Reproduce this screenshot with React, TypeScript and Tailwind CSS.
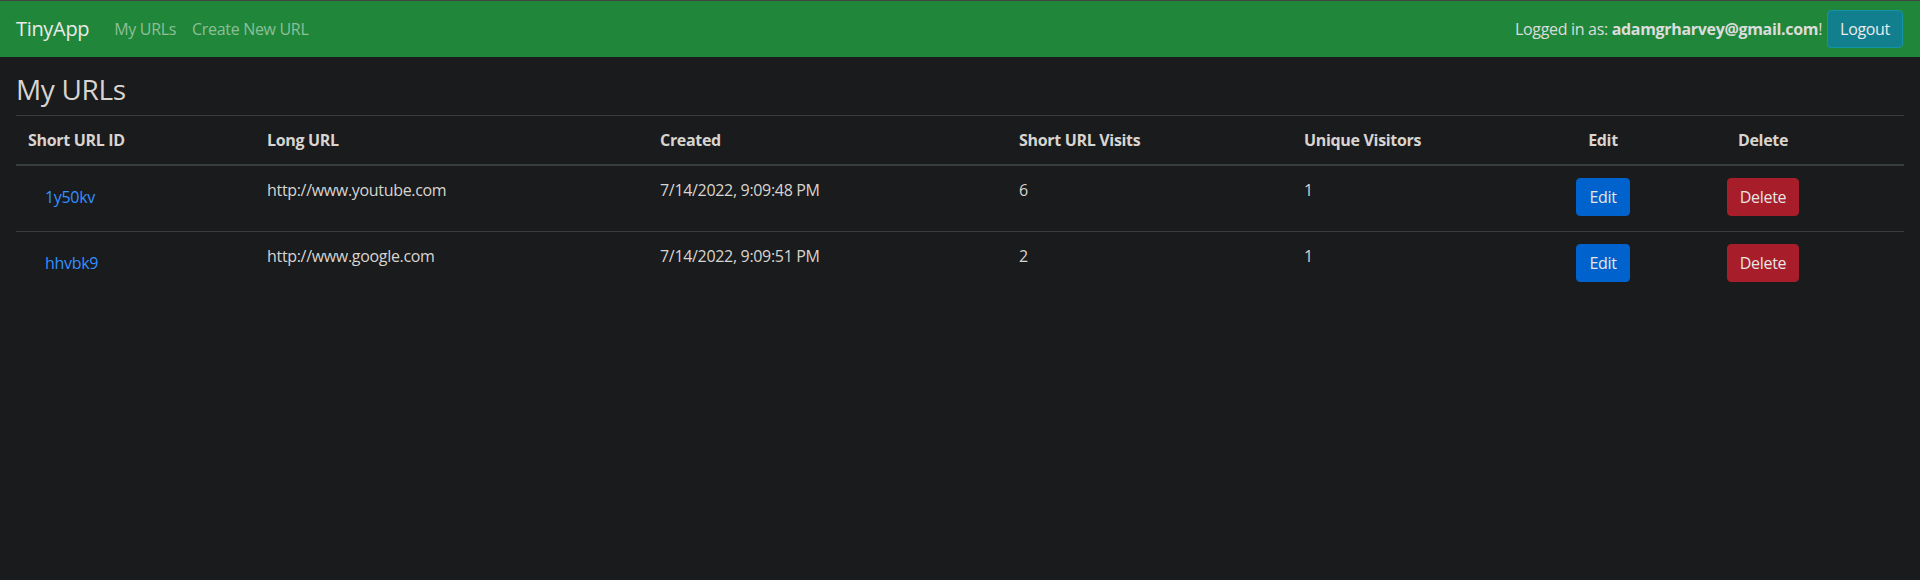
import React from "react";

const rows = [
  { id: "1y50kv", url: "http://www.youtube.com", created: "7/14/2022, 9:09:48 PM", visits: "6", unique: "1" },
  { id: "hhvbk9", url: "http://www.google.com", created: "7/14/2022, 9:09:51 PM", visits: "2", unique: "1" },
];

export default function App() {
  return (
    <div
      className="min-h-[580px] w-full bg-[#1a1b1d] tracking-[-0.02em] text-[#d8d4cf]"
      style={{ fontFamily: '"Open Sans", "Noto Sans", sans-serif' }}
    >
      <nav className="flex h-[57px] items-center justify-between border-t border-[#444] bg-[#20873a] pl-4 pr-[17px]">
        <div className="flex items-center">
          <span className="mr-[17px] text-[20px] leading-[30px] text-[#eaeaea]">TinyApp</span>
          <a className="px-2 text-[16px] leading-6 text-[#8cbf98]">My URLs</a>
          <a className="px-2 text-[16px] leading-6 text-[#8cbf98]">Create New URL</a>
        </div>
        <div className="flex items-center text-[16px] leading-6 text-[#dcdcdc]">
          <span>
            Logged in as: <b className="font-bold">adamgrharvey@gmail.com</b>!
          </span>
          <button className="ml-[5px] h-[38px] rounded-[4px] border border-[#1593a6] bg-[#127f8e] px-3 text-[16px] text-[#ececec]">
            Logout
          </button>
        </div>
      </nav>
      <div className="px-4">
        <h3 className="pt-[15px] pb-[9px] text-[28px] leading-[34px] text-[#d8d4cf]">My URLs</h3>
        <div className="h-px bg-[#3a3d3f]" />
        <table className="w-full table-fixed border-collapse text-left text-[16px] leading-6">
          <colgroup>
            <col className="w-[239px]" />
            <col className="w-[393px]" />
            <col className="w-[359px]" />
            <col className="w-[285px]" />
            <col className="w-[248px]" />
            <col className="w-[126px]" />
            <col className="w-[194px]" />
            <col />
          </colgroup>
          <thead>
            <tr className="border-b-2 border-[#373e40]">
              <th className="p-3 font-bold">Short URL ID</th>
              <th className="p-3 font-bold">Long URL</th>
              <th className="p-3 font-bold">Created</th>
              <th className="p-3 font-bold">Short URL Visits</th>
              <th className="p-3 font-bold">Unique Visitors</th>
              <th className="p-3 text-center font-bold">Edit</th>
              <th className="p-3 text-center font-bold">Delete</th>
              <th className="p-3" />
            </tr>
          </thead>
          <tbody>
            {rows.map((r, i) => (
              <tr key={r.id} className={i > 0 ? "border-t border-[#3a3d3f]" : ""}>
                <td className="px-3 pt-3 pb-[15px] align-top">
                  <a className="inline-block border border-transparent py-[6px] pl-4 pr-3 leading-6 text-[#3391ff]">
                    {r.id}
                  </a>
                </td>
                <td className="px-3 pt-3 pb-[15px] align-top">{r.url}</td>
                <td className="px-3 pt-3 pb-[15px] align-top">{r.created}</td>
                <td className="px-3 pt-3 pb-[15px] align-top">{r.visits}</td>
                <td className="px-3 pt-3 pb-[15px] align-top">{r.unique}</td>
                <td className="px-3 pt-3 pb-[15px] text-center align-top">
                  <button className="h-[38px] rounded-[4px] border border-[#0062cc] bg-[#0062cc] px-3 text-[16px] text-[#e8e6e3]">
                    Edit
                  </button>
                </td>
                <td className="px-3 pt-3 pb-[15px] text-center align-top">
                  <button className="h-[38px] rounded-[4px] border border-[#a71d2a] bg-[#a71d2a] px-3 text-[16px] text-[#e8e6e3]">
                    Delete
                  </button>
                </td>
                <td className="px-3 pt-3 pb-[15px]" />
              </tr>
            ))}
          </tbody>
        </table>
      </div>
    </div>
  );
}
